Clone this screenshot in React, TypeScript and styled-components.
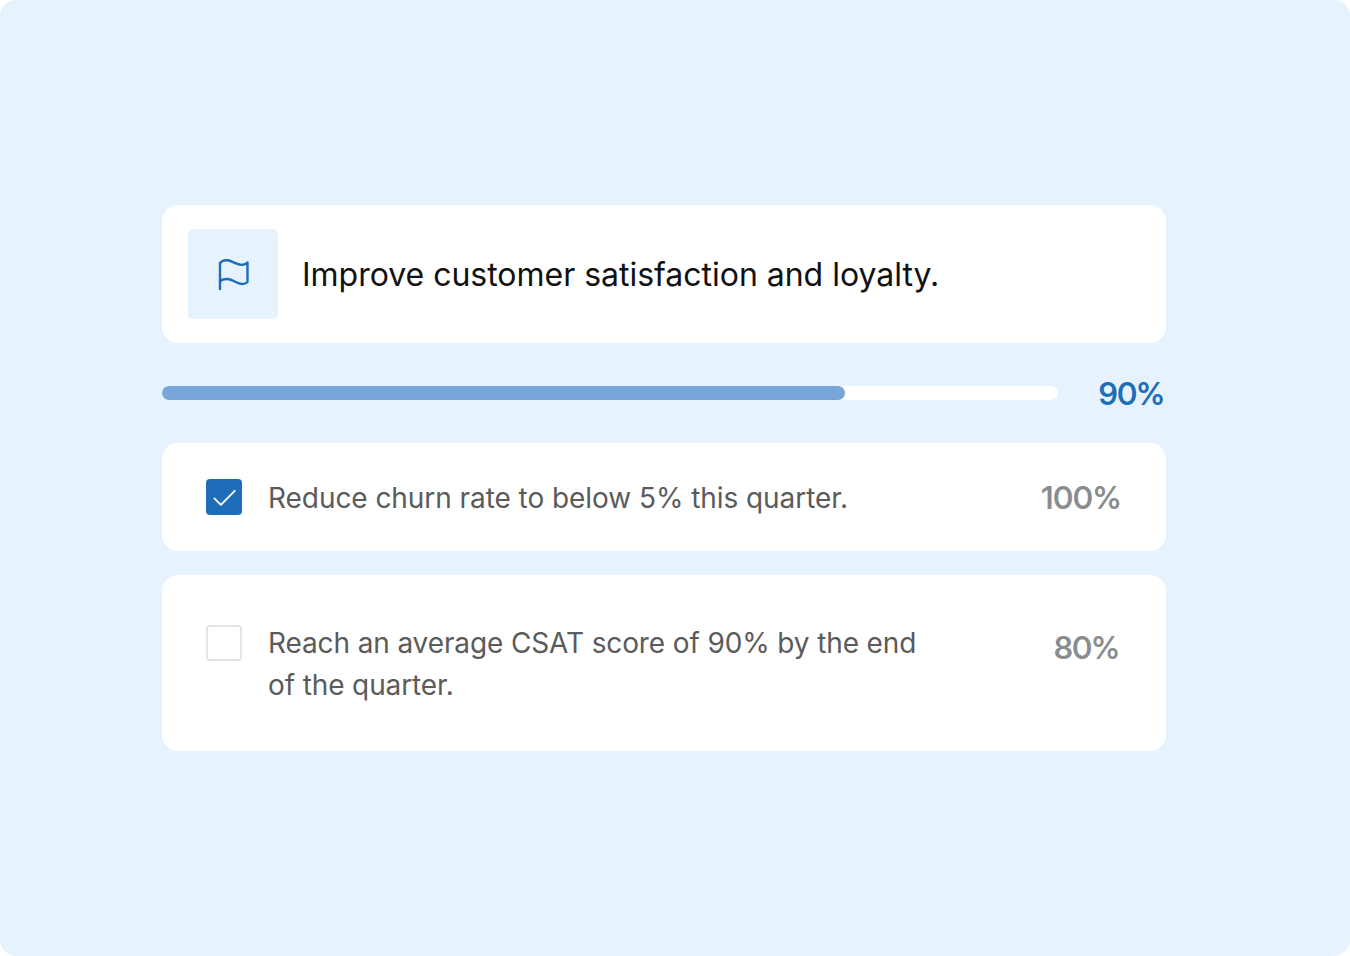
import styled, { createGlobalStyle } from 'styled-components';

const goal = {
  title: 'Improve customer satisfaction and loyalty.',
  progress: 90,
  barFill: 683 / 896,
};

const keyResults = [
  {
    text: 'Reduce churn rate to below 5% this quarter.',
    progress: 100,
    done: true,
  },
  {
    text: 'Reach an average CSAT score of 90% by the end of the quarter.',
    progress: 80,
    done: false,
  },
];

function FlagIcon() {
  return (
    <svg width="32" height="32" viewBox="0 0 32 32" fill="none">
      <path
        d="M2 29.9V4.1C3.6 2 6.6 0.9 9.8 1.3C15 2 19 6.3 24.4 5.8C26.7 5.6 28.6 4.6 29.5 3.4V23C28 24.5 26.2 25 24.4 25C19 25.2 15 20.2 9.8 20C6.6 19.8 3.6 20.6 2 22.4"
        stroke="#1d6db8"
        strokeWidth="2.4"
        strokeLinecap="round"
        strokeLinejoin="round"
      />
    </svg>
  );
}

function CheckIcon() {
  return (
    <svg width="24" height="18" viewBox="0 0 24 18" fill="none">
      <path
        d="M2.5 10.5L8.9 16.8L22.7 2.8"
        stroke="white"
        strokeWidth="1.8"
        strokeLinecap="round"
        strokeLinejoin="round"
      />
    </svg>
  );
}

function App() {
  return (
    <>
      <GlobalStyle />
      <Page>
        <GoalCard>
          <IconTile>
            <FlagIcon />
          </IconTile>
          <GoalTitle>{goal.title}</GoalTitle>
        </GoalCard>
        <ProgressRow>
          <Track>
            <Fill style={{ width: `${goal.barFill * 100}%` }} />
          </Track>
          <GoalPercent>{goal.progress}%</GoalPercent>
        </ProgressRow>
        <ResultList>
          {keyResults.map(({ text, progress, done }) => (
            <ResultCard key={text} $done={done}>
              <Checkbox $checked={done}>{done && <CheckIcon />}</Checkbox>
              <ResultText $done={done}>{text}</ResultText>
              <ResultPercent $done={done}>{progress}%</ResultPercent>
            </ResultCard>
          ))}
        </ResultList>
      </Page>
    </>
  );
}

export default App;

const GlobalStyle = createGlobalStyle`
  * {
    box-sizing: border-box;
  }

  body {
    margin: 0;
    background: white;
    font-family: Inter, sans-serif;
  }
`;

const Page = styled.main`
  height: 956px;
  padding: 205px 184px 0 162px;
  border-radius: 16px;
  background: #e6f3ff;
`;

const Card = styled.div`
  display: flex;
  border-radius: 16px;
  background: white;
`;

const GoalCard = styled(Card)`
  align-items: center;
  height: 138px;
  padding: 0 26px;
  gap: 24px;
`;

const IconTile = styled.div`
  display: flex;
  align-items: center;
  justify-content: center;
  width: 90px;
  height: 90px;
  padding: 2px 0 0 2px;
  border-radius: 5px;
  background: #e6f3ff;
`;

const GoalTitle = styled.h1`
  margin: 0;
  padding-top: 1px;
  color: #111;
  font-size: 32px;
  font-weight: 400;
  line-height: 40px;
  letter-spacing: -0.02px;
  white-space: nowrap;
`;

const ProgressRow = styled.div`
  display: flex;
  align-items: center;
  justify-content: space-between;
  height: 100px;
  padding-right: 2px;
`;

const Track = styled.div`
  width: 896px;
  height: 14px;
  border-radius: 7px;
  background: white;
`;

const Fill = styled.div`
  height: 100%;
  border-radius: 7px;
  background: #78a6d8;
`;

const Percent = styled.span`
  font-family: 'Inter Display', Inter, sans-serif;
  font-size: 31px;
  font-weight: 600;
  line-height: 40px;
`;

const GoalPercent = styled(Percent)`
  padding-top: 2px;
  color: #1d6db8;
  letter-spacing: -0.5px;
`;

const ResultList = styled.div`
  display: flex;
  flex-direction: column;
  gap: 24px;
`;

const ResultCard = styled(Card)<{ $done: boolean }>`
  align-items: flex-start;
  height: ${props => (props.$done ? '108px' : '176px')};
  padding: ${props => (props.$done ? '36px 45px 0 44px' : '50px 47px 0 44px')};
`;

const Checkbox = styled.div<{ $checked: boolean }>`
  display: flex;
  align-items: center;
  justify-content: center;
  flex-shrink: 0;
  width: 36px;
  height: 36px;
  border: ${props => (props.$checked ? 'none' : '2px solid #e4e4e4')};
  border-radius: 4px;
  background: ${props => (props.$checked ? '#1d6db8' : 'white')};
`;

const ResultText = styled.p<{ $done: boolean }>`
  width: 670px;
  margin: ${props => (props.$done ? '-2px' : '-3px')} 0 0 26px;
  color: #5a5b5b;
  font-size: 28px;
  line-height: 42px;
  letter-spacing: ${props => (props.$done ? '-0.06px' : '-0.12px')};
`;

const ResultPercent = styled(Percent)<{ $done: boolean }>`
  margin: ${props => (props.$done ? '-1px' : '3px')} 0 0 auto;
  color: #8a8d8f;
  letter-spacing: ${props => (props.$done ? '0' : '-0.5px')};
`;
